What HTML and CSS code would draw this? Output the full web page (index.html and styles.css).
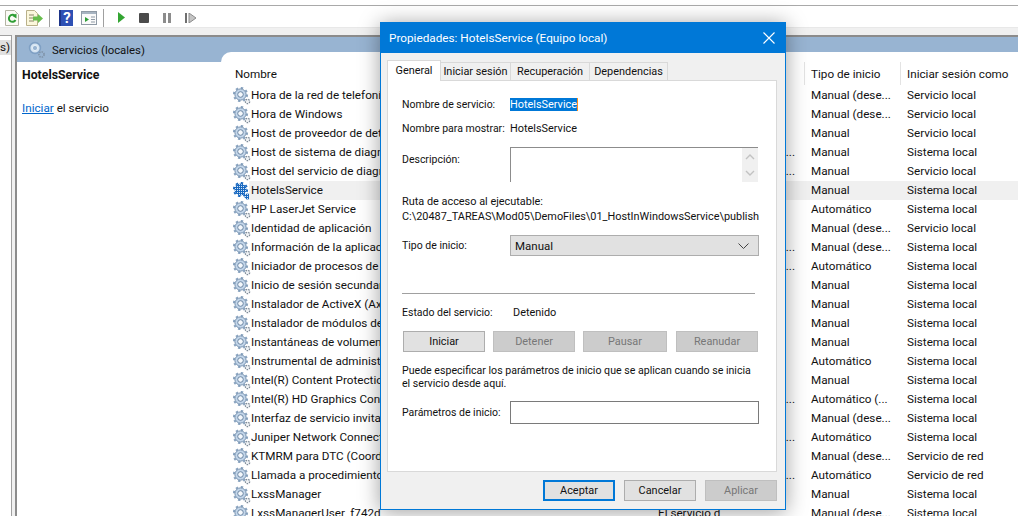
FILE: index.html
```html
<!DOCTYPE html>
<html>
<head>
    <title>Servicios</title>
    <link rel="stylesheet" href="styles.css">
</head>
<body>
    <svg class="defs" width="0" height="0">
        <defs>
            <pattern id="dots" width="2" height="2" patternUnits="userSpaceOnUse">
                <rect width="2" height="2" fill="#1a69c0"/>
                <rect width="1" height="1" fill="#d5e6f7"/>
            </pattern>
            <symbol id="gear" viewBox="0 0 18 18">
                <circle cx="7.5" cy="7.5" r="6.6" fill="none" stroke="#8aa4c0" stroke-width="2" stroke-dasharray="2.4 2.8"/>
                <circle cx="7.5" cy="7.5" r="5.6" fill="#c3d6ea" stroke="#7893b0"/>
                <circle cx="7.5" cy="7.5" r="2.8" fill="#f4f8fc" stroke="#6a85a3"/>
                <circle cx="14.500" cy="14.500" r="2.2" fill="#eef1f4" stroke="#7f8c99" stroke-width="1.3" stroke-dasharray="1.5 1"/>
            </symbol>
            <symbol id="gearSel" viewBox="0 0 18 18">
                <circle cx="7.5" cy="7.5" r="6" fill="url(#dots)"/>
                <circle cx="7.5" cy="7.5" r="6.6" fill="none" stroke="#1a69c0" stroke-width="2" stroke-dasharray="2.4 2.8"/>
                <circle cx="14.500" cy="14.500" r="3" fill="url(#dots)"/>
            </symbol>
            <symbol id="gearHead" viewBox="0 0 18 18">
                <circle cx="7" cy="7" r="5.4" fill="#d5e4f2" stroke="#7fa0c4" stroke-width="1.6"/>
                <circle cx="7" cy="7" r="2.6" fill="#98b4d2" stroke="#e6eff7"/>
                <circle cx="13.5" cy="13.5" r="2.6" fill="none" stroke="#7f93a8" stroke-width="1.6" stroke-dasharray="1.4 1"/>
            </symbol>
        </defs>
    </svg>

    <div class="menubar"></div>

    <div class="toolbar">
        <svg class="tool tool-first" width="14" height="16" viewBox="0 0 14 16">
            <path d="M.5.5h9l4 4v11H.5z" fill="#fbfbf6" stroke="#b4b4a4"/>
            <path d="M10 6A3.500 3.500 0 1 0 10.500 10" fill="none" stroke="#2f9e35" stroke-width="2"/>
            <path d="M7.5 6l4-2.500v5z" fill="#2f9e35"/>
        </svg>
        <svg class="tool" width="17" height="16" viewBox="0 0 17 16">
            <path d="M.5.5h8l3 3v12H.5z" fill="#fbf7dc" stroke="#b9b08a"/>
            <path d="M3 5h5M3 8h4M3 11h5" stroke="#8a8468"/>
            <path d="M7 6.5h5V4l5 4.5-5 4.5v-2.5H7z" fill="#67bd4c"/>
        </svg>
        <span class="tool-sep"></span>
        <div class="help-book">?</div>
        <svg class="tool tool-wide" width="16" height="14" viewBox="0 0 16 14">
            <rect x=".5" y=".5" width="15" height="13" fill="#fafafa" stroke="#8f9aa5"/>
            <path d="M1 1h14v2H1z" fill="#a7b4c1"/>
            <path d="M4 6l4 2.500L4 11z" fill="#2f9e35"/>
            <path d="M10 6h4M10 8.500h4M10 11h4" stroke="#8f9aa5"/>
        </svg>
        <span class="tool-sep"></span>
        <svg class="tool tool-play" width="8" height="11" viewBox="0 0 8 11"><path d="M0 0l7 5.500L0 11z" fill="#33a532"/></svg>
        <svg class="tool tool-stop" width="10" height="10" viewBox="0 0 10 10"><rect width="10" height="10" rx="1" fill="#4b4b4b"/></svg>
        <svg class="tool tool-pause" width="8" height="10" viewBox="0 0 8 10"><path d="M0 0h3v10H0zM5 0h3v10H5z" fill="#8c8c8c"/></svg>
        <svg class="tool tool-resume" width="12" height="10" viewBox="0 0 12 10"><path d="M0 0h2v10H0z" fill="#6f6f6f"/><path d="M4 0l7 5-7 5z" fill="#c4c4c4" stroke="#8c8c8c"/></svg>
    </div>

    <div class="workspace">
        <div class="tree"><div class="tree-sel">s)</div></div>
        <div class="snapin">
            <div class="snapin-left">
                <div class="snapin-title">
                    <svg class="icon-head" width="18" height="18"><use href="#gearHead"/></svg>
                    <span>Servicios (locales)</span>
                </div>
                <div class="detail">
                    <div class="detail-name">HotelsService</div>
                    <div class="detail-action"><a href="#">Iniciar</a> el servicio</div>
                </div>
            </div>
            <div class="list">
                <div class="list-head">
                    <div class="col-name">Nombre</div>
                    <div class="col-type">Tipo de inicio</div>
                    <div class="col-logon">Iniciar sesión como</div>
                </div>
                <div class="row"><svg width="18" height="18"><use href="#gear"/></svg><div class="cells"><span>Hora de la red de telefonía</span><span></span><span></span><span>Manual (dese...</span><span>Servicio local</span></div></div>
                <div class="row"><svg width="18" height="18"><use href="#gear"/></svg><div class="cells"><span>Hora de Windows</span><span></span><span></span><span>Manual (dese...</span><span>Servicio local</span></div></div>
                <div class="row"><svg width="18" height="18"><use href="#gear"/></svg><div class="cells"><span>Host de proveedor de detección</span><span></span><span></span><span>Manual</span><span>Servicio local</span></div></div>
                <div class="row"><svg width="18" height="18"><use href="#gear"/></svg><div class="cells"><span>Host de sistema de diagnóstico</span><span></span><span>En ejecu...</span><span>Manual</span><span>Sistema local</span></div></div>
                <div class="row"><svg width="18" height="18"><use href="#gear"/></svg><div class="cells"><span>Host del servicio de diagnóstico</span><span></span><span>En ejecu...</span><span>Manual</span><span>Servicio local</span></div></div>
                <div class="row row-sel"><svg width="18" height="18"><use href="#gearSel"/></svg><div class="cells"><span>HotelsService</span><span></span><span></span><span>Manual</span><span>Sistema local</span></div></div>
                <div class="row"><svg width="18" height="18"><use href="#gear"/></svg><div class="cells"><span>HP LaserJet Service</span><span></span><span></span><span>Automático</span><span>Sistema local</span></div></div>
                <div class="row"><svg width="18" height="18"><use href="#gear"/></svg><div class="cells"><span>Identidad de aplicación</span><span></span><span></span><span>Manual (dese...</span><span>Servicio local</span></div></div>
                <div class="row"><svg width="18" height="18"><use href="#gear"/></svg><div class="cells"><span>Información de la aplicación</span><span></span><span>En ejecu...</span><span>Manual (dese...</span><span>Sistema local</span></div></div>
                <div class="row"><svg width="18" height="18"><use href="#gear"/></svg><div class="cells"><span>Iniciador de procesos de servidor</span><span></span><span>En ejecu...</span><span>Automático</span><span>Sistema local</span></div></div>
                <div class="row"><svg width="18" height="18"><use href="#gear"/></svg><div class="cells"><span>Inicio de sesión secundario</span><span></span><span></span><span>Manual</span><span>Sistema local</span></div></div>
                <div class="row"><svg width="18" height="18"><use href="#gear"/></svg><div class="cells"><span>Instalador de ActiveX (AxInstSV)</span><span></span><span></span><span>Manual</span><span>Sistema local</span></div></div>
                <div class="row"><svg width="18" height="18"><use href="#gear"/></svg><div class="cells"><span>Instalador de módulos de Windows</span><span></span><span></span><span>Manual</span><span>Sistema local</span></div></div>
                <div class="row"><svg width="18" height="18"><use href="#gear"/></svg><div class="cells"><span>Instantáneas de volumen</span><span></span><span></span><span>Manual</span><span>Sistema local</span></div></div>
                <div class="row"><svg width="18" height="18"><use href="#gear"/></svg><div class="cells"><span>Instrumental de administración</span><span></span><span></span><span>Automático</span><span>Sistema local</span></div></div>
                <div class="row"><svg width="18" height="18"><use href="#gear"/></svg><div class="cells"><span>Intel(R) Content Protection</span><span></span><span></span><span>Manual</span><span>Sistema local</span></div></div>
                <div class="row"><svg width="18" height="18"><use href="#gear"/></svg><div class="cells"><span>Intel(R) HD Graphics Control</span><span></span><span>En ejecu...</span><span>Automático (...</span><span>Sistema local</span></div></div>
                <div class="row"><svg width="18" height="18"><use href="#gear"/></svg><div class="cells"><span>Interfaz de servicio invitado</span><span></span><span></span><span>Manual (dese...</span><span>Sistema local</span></div></div>
                <div class="row"><svg width="18" height="18"><use href="#gear"/></svg><div class="cells"><span>Juniper Network Connect</span><span></span><span>En ejecu...</span><span>Automático</span><span>Sistema local</span></div></div>
                <div class="row"><svg width="18" height="18"><use href="#gear"/></svg><div class="cells"><span>KTMRM para DTC (Coordinador)</span><span></span><span></span><span>Manual (dese...</span><span>Servicio de red</span></div></div>
                <div class="row"><svg width="18" height="18"><use href="#gear"/></svg><div class="cells"><span>Llamada a procedimiento remoto</span><span></span><span>En ejecu...</span><span>Automático</span><span>Servicio de red</span></div></div>
                <div class="row"><svg width="18" height="18"><use href="#gear"/></svg><div class="cells"><span>LxssManager</span><span></span><span></span><span>Manual</span><span>Sistema local</span></div></div>
                <div class="row"><svg width="18" height="18"><use href="#gear"/></svg><div class="cells"><span>LxssManagerUser_f742d</span><span>El servicio d</span><span></span><span>Manual (dese...</span><span>Sistema local</span></div></div>
            </div>
        </div>
    </div>

    <div class="dialog">
        <div class="dialog-title">
            <span>Propiedades: HotelsService (Equipo local)</span>
            <svg width="12" height="12" viewBox="0 0 12 12"><path d="M.5.5l11 11M11.500.5l-11 11" stroke="#fff" stroke-width="1.1"/></svg>
        </div>
        <div class="tabs">
            <div class="tab tab-active">General</div>
            <div class="tab tab-logon">Iniciar sesión</div>
            <div class="tab tab-recovery">Recuperación</div>
            <div class="tab tab-deps">Dependencias</div>
        </div>
        <div class="panel">
            <div class="field field-name">
                <span class="label">Nombre de servicio:</span>
                <span class="selected">HotelsService</span>
            </div>
            <div class="field field-display">
                <span class="label">Nombre para mostrar:</span>
                <span>HotelsService</span>
            </div>
            <div class="field field-desc">
                <span class="label">Descripción:</span>
                <div class="desc-box">
                    <div class="scrollbar">
                        <svg width="10" height="6" viewBox="0 0 10 6"><path d="M1 5l4-4 4 4" fill="none" stroke="#c2c2c2" stroke-width="1.4"/></svg>
                        <svg width="10" height="6" viewBox="0 0 10 6"><path d="M1 1l4 4 4-4" fill="none" stroke="#c2c2c2" stroke-width="1.4"/></svg>
                    </div>
                </div>
            </div>
            <div class="path-label">Ruta de acceso al ejecutable:</div>
            <div class="path-value">C:\20487_TAREAS\Mod05\DemoFiles\01_HostInWindowsService\publish</div>
            <div class="field field-start">
                <span class="label">Tipo de inicio:</span>
                <div class="select">
                    <span>Manual</span>
                    <svg width="11" height="6" viewBox="0 0 11 6"><path d="M.5.5l5 5 5-5" fill="none" stroke="#444"/></svg>
                </div>
            </div>
            <div class="divider"></div>
            <div class="status">
                <span class="label">Estado del servicio:</span>
                <span class="status-value">Detenido</span>
            </div>
            <div class="actions">
                <div class="btn btn-start">Iniciar</div>
                <div class="btn btn-off btn-stop">Detener</div>
                <div class="btn btn-off btn-pause">Pausar</div>
                <div class="btn btn-off btn-resume">Reanudar</div>
            </div>
            <p class="hint">Puede especificar los parámetros de inicio que se aplican cuando se inicia<br>el servicio desde aquí.</p>
            <div class="field field-params">
                <span class="label">Parámetros de inicio:</span>
                <div class="input"></div>
            </div>
        </div>
        <div class="dialog-buttons">
            <div class="btn btn-default">Aceptar</div>
            <div class="btn">Cancelar</div>
            <div class="btn btn-off">Aplicar</div>
        </div>
    </div>
</body>
</html>
```

FILE: styles.css
```css
* {
    box-sizing: border-box;
}
html, body {
    height: 100%;
}
body {
    margin: 0;
    overflow: hidden;
    background-color: #f0f0f0;
    color: #111;
    font-family: "Roboto", "Liberation Sans", sans-serif;
    font-size: 11.7px;
}
.defs {
    display: block;
    height: 0;
}

/* console window */
.menubar {
    height: 6px;
    background-color: #fff;
    border-bottom: 1px solid #a9a9a9;
}
.toolbar {
    display: flex;
    align-items: center;
    height: 22px;
    padding-top: 2px;
    background-color: #fff;
    border-bottom: 1px solid #e8e8e8;
}
.tool-first {
    margin-left: 5px;
}
.tool {
    flex: none;
    margin-right: 7px;
}
.tool-sep {
    width: 1px;
    height: 18px;
    margin: 0 9px 0 -1px;
    background-color: #a0a0a0;
}
.help-book {
    width: 14px;
    height: 16px;
    margin-right: 8px;
    background-color: #2e50b4;
    border-left: 2px solid #1d3488;
    color: #fff;
    font-weight: bold;
    font-size: 15px;
    line-height: 16px;
    text-align: center;
}
.tool-wide {
    margin-right: 7px;
}
.tool-play {
    margin: 0 13px 0 5px;
}
.tool-stop {
    margin-right: 14px;
}
.tool-pause {
    margin-right: 14px;
}
.workspace {
    display: flex;
    gap: 3px;
    height: 488px;
    padding-top: 7px;
}
.tree {
    width: 12px;
    padding-top: 4px;
    background-color: #fff;
    border-top: 1px solid #a0a0a0;
    border-right: 1px solid #a0a0a0;
}
.tree-sel {
    height: 15px;
    background-color: #e0e0e0;
    text-align: right;
    padding-right: 2px;
    line-height: 15px;
}
.snapin {
    flex: 1;
    display: grid;
    grid-template-columns: 204px 1fr;
    background-color: #98b4d2;
    border-top: 2px solid #8c8c8c;
    border-left: 2px solid #8c8c8c;
}
.snapin-title {
    display: flex;
    align-items: center;
    height: 25px;
    padding-left: 11px;
    font-size: 11.400px;
}
.icon-head {
    margin-right: 6px;
}
.detail {
    height: 460px;
    padding: 6px 0 0 5px;
    background-color: #fff;
}
.detail-name {
    font-weight: bold;
    font-size: 12.300px;
}
.detail-action {
    margin-top: 19px;
}
.detail-action a {
    color: #0066cc;
}

/* service list */
.list {
    margin-top: 15px;
    padding-left: 12px;
    background-color: #fff;
    border-top-left-radius: 10px;
    overflow: hidden;
}
.list-head {
    display: flex;
    height: 34px;
    padding-top: 15px;
}
.col-name {
    flex: none;
    margin-left: 2px;
    width: 569px;
}
.col-type, .col-logon {
    flex: none;
    height: 23px;
    margin-top: -5px;
    padding: 5px 0 0 6px;
    border-left: 1px solid #e3e3e3;
}
.col-type {
    width: 96px;
}
.col-logon {
    width: 118px;
}
.row {
    display: flex;
    height: 19px;
    align-items: center;
}
.row svg {
    flex: none;
    display: block;
    margin-right: -2px;
}
.cells {
    flex: 1;
    display: grid;
    grid-template-columns: 407px 84px 62px 96px 1fr;
    height: 19px;
    line-height: 19px;
    padding-left: 2px;
    white-space: nowrap;
}
.cells span {
    overflow: hidden;
}
.cells span:nth-child(4), .cells span:nth-child(5) {
    padding-left: 7px;
}
.row-sel .cells {
    background-color: #f0f0f0;
}

/* properties dialog */
.dialog {
    position: absolute;
    left: 380px;
    top: 22px;
    width: 406px;
    height: 488px;
    padding: 0 8px;
    font-size: 10.900px;
    background-color: #f0f0f0;
    border: 1px solid #0078d7;
    box-shadow: 0 2px 20px rgba(0, 0, 0, 0.38);
}
.dialog-title {
    display: flex;
    justify-content: space-between;
    align-items: center;
    height: 30px;
    margin: 0 -8px;
    padding: 0 10px 0 8px;
    background-color: #0078d7;
    color: #fff;
    font-size: 11.750px;
}
.tabs {
    display: flex;
    align-items: flex-end;
    height: 27px;
    margin-left: -2px;
}
.tab {
    height: 18px;
    line-height: 17px;
    text-align: center;
    background-color: #f0f0f0;
    border: 1px solid #d9d9d9;
    border-bottom: none;
    margin-right: -1px;
}
.tab-active {
    position: relative;
    z-index: 1;
    width: 54px;
    height: 21px;
    margin-bottom: -1px;
    line-height: 19px;
    background-color: #fff;
}
.tab-logon {
    width: 71px;
}
.tab-recovery {
    width: 80px;
}
.tab-deps {
    width: 79px;
}
.panel {
    height: 392px;
    margin-left: -2px;
    padding: 0 18px 0 14px;
    background-color: #fff;
    border: 1px solid #d9d9d9;
}
.field {
    display: grid;
    grid-template-columns: 108px 1fr;
    align-items: center;
}
.label {
    font-size: 10.500px;
}
.field-name {
    height: 15px;
    margin-top: 16px;
}
.selected {
    justify-self: start;
    height: 13px;
    line-height: 13px;
    background-color: #0078d7;
    color: #fff;
    border-right: 1px solid #ff8c1a;
}
.field-display {
    height: 15px;
    margin-top: 9px;
}
.field-desc {
    align-items: start;
    margin-top: 11px;
}
.field-desc .label {
    margin-top: 6px;
}
.desc-box {
    display: flex;
    justify-content: flex-end;
    width: 248px;
    height: 35px;
    border-top: 1px solid #8c8c8c;
    border-left: 1px solid #8c8c8c;
}
.scrollbar {
    display: flex;
    flex-direction: column;
    align-items: center;
    justify-content: space-between;
    width: 16px;
    padding: 6px 0;
    background-color: #f0f0f0;
}
.scrollbar svg {
    display: block;
}
.path-label {
    margin-top: 12px;
    line-height: 15px;
}
.path-value {
    line-height: 15px;
    white-space: nowrap;
}
.field-start {
    margin-top: 11px;
}
.select {
    display: flex;
    justify-content: space-between;
    align-items: center;
    width: 249px;
    height: 21px;
    padding: 0 9px 0 4px;
    font-size: 11.500px;
    background-color: #e1e1e1;
    border: 1px solid #adadad;
}
.divider {
    width: 353px;
    height: 1px;
    margin-top: 37px;
    background-color: #a0a0a0;
}
.status {
    display: flex;
    margin-top: 11px;
    line-height: 15px;
}
.status .label {
    width: 111px;
}
.actions {
    display: flex;
    margin: 11px 0 0 1px;
}
.btn {
    height: 21px;
    line-height: 19px;
    text-align: center;
    background-color: #e1e1e1;
    border: 1px solid #adadad;
}
.btn-off {
    background-color: #cccccc;
    border-color: #bfbfbf;
    color: #777;
}
.btn-start, .btn-stop {
    width: 82px;
    margin-right: 8px;
}
.btn-pause {
    width: 84px;
    margin-right: 9px;
}
.btn-resume {
    width: 82px;
}
.hint {
    margin: 12px 0 0;
    font-size: 10.600px;
    line-height: 13px;
    white-space: nowrap;
}
.field-params {
    margin-top: 11px;
}
.input {
    width: 249px;
    height: 23px;
    background-color: #fff;
    border: 1px solid #7a7a7a;
}
.dialog-buttons {
    display: flex;
    justify-content: flex-end;
    gap: 9px;
    margin-top: 8px;
}
.dialog-buttons .btn {
    width: 72px;
}
.dialog-buttons .btn-default {
    border: 2px solid #0078d7;
    line-height: 17px;
}
```
